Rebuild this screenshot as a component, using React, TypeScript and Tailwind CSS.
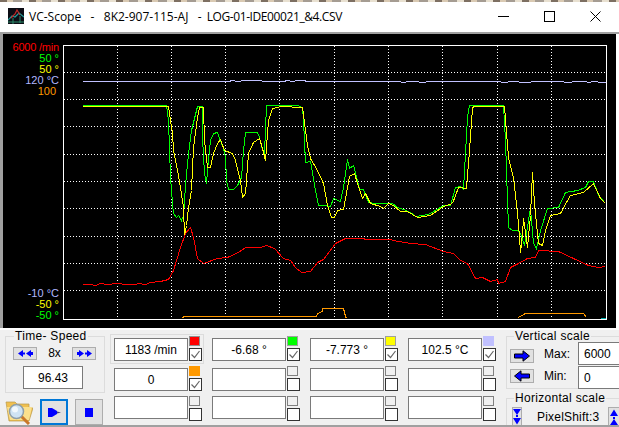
import React from 'react';

// plot lines in page coordinates (the svg viewBox starts at the plot's inner corner)
const LAVENDER = '82,81 228,81 232,80 237,81 245,80 260,80 263,81 283,81 287,80 292,81 298,80 303,80 307,81 400,81 401,82 405,82 406,81 418,81 419,82 425,82 426,81 440,81 500,81 501,82 507,82 508,81 518,81 519,82 530,82 531,81 563,81 564,82 571,82 572,81 586,81 587,82 590,82 591,81 597,81 598,82 605,82';

const ORANGE = '182,317 184,316 316,316 317,313 322,311 322,308 343,308 345,316 346,318 M518,317 525,313 583,313 586,317';

const GREEN = '82,105 166,105 168,120 170,177 172,203 173,213 176,217 178,215 181,220 183,215 185,185 188,153 191,130 193,122 197,106 202,106 202,137 204,173 206,183 207,170 210,140 213,133 217,132 219,138 223,148 225,157 226,180 228,189 233,189 237,185 241,177 243,150 245,132 257,132 259,137 262,150 264,153 266,105 297,105 302,107 303,120 305,162 310,161 315,190 318,205 325,205 330,206 333,198 340,201 343,187 347,159 349,168 353,165 355,172 359,189 363,189 368,202 375,203 392,203 397,207 403,209 410,212 415,216 423,215 430,213 443,205 450,205 455,187 460,186 463,189 467,117 469,105 503,105 505,140 507,200 508,227 512,230 517,230 520,233 524,245 528,220 530,208 533,243 536,248 540,230 547,208 558,207 565,192 577,190 585,187 588,181 593,181 598,195 605,203';

const YELLOW = '82,106 168,106 170,120 172,133 173,150 177,170 180,187 183,207 184,236 186,225 188,207 191,190 193,147 197,117 199,107 203,107 204,140 207,167 210,167 213,153 217,143 220,139 224,150 232,153 235,160 240,180 242,197 245,193 248,153 253,142 259,138 262,148 265,160 268,120 272,108 277,107 280,106 302,107 307,145 310,158 317,170 323,183 327,205 331,217 334,217 337,210 343,209 349,176 354,173 357,183 362,198 365,193 370,203 380,206 383,208 388,203 393,205 400,211 407,211 417,217 430,215 443,206 452,203 458,187 466,188 469,150 472,108 473,106 504,106 508,157 513,177 517,213 518,223 520,252 522,233 523,218 527,247 530,215 532,172 534,203 538,243 542,245 545,230 550,215 560,213 567,200 570,195 583,192 593,183 600,198 605,203';

const RED = '82,284 90,284 95,285 100,283 107,284 117,283 125,284 135,284 138,283 145,284 150,282 160,281 168,279 173,270 180,247 185,233 190,227 193,237 197,258 203,263 217,258 227,257 238,252 245,247 260,247 266,245 274,248 283,258 290,260 295,267 301,272 310,271 317,262 323,259 335,243 345,238 363,238 365,239 390,239 393,240 410,243 425,244 443,251 453,253 460,260 467,263 475,278 482,277 490,281 497,279 498,283 505,281 510,267 518,263 527,258 535,257 538,250 558,251 573,258 588,265 598,267 605,266';

const GRID_X = [117, 171, 225, 279, 334, 388, 442, 497, 551];
const GRID_Y = [72, 99, 126, 154, 181, 208, 236, 263, 290];

const Chart = () => (
  <svg width={542} height={273} viewBox="64 46 542 273" shapeRendering="crispEdges" fill="none">
    <g stroke="#ffffff" strokeDasharray="1 2">
      {GRID_X.map((x) => <line key={x} x1={x + 0.5} y1={46} x2={x + 0.5} y2={319} />)}
      {GRID_Y.map((y) => <line key={y} x1={64} y1={y + 0.5} x2={606} y2={y + 0.5} />)}
    </g>
    <g transform="translate(0.5 0.5)">
      <polyline points={LAVENDER} stroke="#c0c0ff" />
      {ORANGE.split(' M').map((pts) => <polyline key={pts} points={pts} stroke="#ff9900" />)}
      <polyline points={GREEN} stroke="#00ff00" />
      <polyline points={YELLOW} stroke="#ffff00" />
      <polyline points={RED} stroke="#ff0000" />
    </g>
    <rect x={601} y={318} width={5} height={1} fill="#00b0b0" />
  </svg>
);

const Swatch = ({ className }: { className: string }) => (
  <span className={`block w-[11px] h-[10px] border ${className}`} />
);

const Check = ({ on }: { on?: boolean }) => (
  <span className="block w-[13px] h-[13px] border border-[#333333] bg-white">
    {on && (
      <svg width={11} height={11} viewBox="0 0 11 11" fill="none">
        <path d="M1.5 5.5 L4.5 8.5 L9.5 2" stroke="#666666" strokeWidth={1.2} />
      </svg>
    )}
  </span>
);

const Field = ({ value, className = '' }: { value?: string; className?: string }) => (
  <input
    readOnly
    value={value ?? ''}
    className={`block w-[74px] h-[23px] border border-[#7a7a7a] bg-white text-center text-[12px] text-black outline-none ${className}`}
  />
);

type CellProps = { value?: string; swatch: string; on?: boolean; framed?: boolean; flush?: boolean };

const Cell = ({ value, swatch, on, framed, flush }: CellProps) => (
  <div className={`flex w-[94px] h-[30px] pl-[3px] pt-[1px] border ${framed ? 'border-[#dcdcdc]' : 'border-transparent'}`}>
    <Field value={value} className={flush ? '' : 'mt-[2px]'} />
    <div className="ml-[1px] flex flex-col gap-[2px]">
      <Swatch className={swatch} />
      <Check on={on} />
    </div>
  </div>
);

const EMPTY = 'border-[#808080] bg-[#f0f0f0]';

const SmallBtn = ({ children, className = '' }: { children: React.ReactNode; className?: string }) => (
  <button className={`flex items-center justify-center border border-[#adadad] bg-[#e1e1e1] ${className}`}>
    {children}
  </button>
);

const Rewind = ({ flip }: { flip?: boolean }) => (
  <svg width={15} height={7} viewBox="0 0 15 7" className={flip ? '-scale-x-100' : ''}>
    <path d="M0 3.5 L5 0 V7 Z M5 2.5 H7 V4.5 H5 Z M8 3.5 L13 0 V7 Z M13 2 H15 V5 H13 Z" fill="#0000ff" />
  </svg>
);

const BigArrow = ({ left }: { left?: boolean }) => (
  <svg width={16} height={12} viewBox="0 0 16 12" className={left ? '-scale-x-100' : ''}>
    <path d="M0.5 4 H9 V0.8 L15.5 6 L9 11.2 V8 H0.5 Z" fill="#0000ff" stroke="#000000" strokeWidth={1} />
  </svg>
);

const DoubleDown = ({ up }: { up?: boolean }) => (
  <svg width={8} height={16} viewBox="0 0 8 16" className={up ? '-scale-y-100' : ''}>
    <path d="M0 0 H8 L4 6 Z M3 6 H5 V8 H3 Z M0 9 H8 L4 15.5 Z" fill="#0000ff" />
  </svg>
);

const FolderIcon = () => (
  <svg width={28} height={26} viewBox="0 0 28 26" className="block">
    <path d="M1 3 H10 L12 5 H24 V9 H28 L24 22 H4 Z" fill="#f0c050" stroke="#b89a4a" strokeWidth={0.7} />
    <path d="M2 8 H27 L24 21 H5 Z" fill="#fbe08c" />
    <path d="M16 17 L24 25" stroke="#c9782a" strokeWidth={3} />
    <circle cx={11.5} cy={12.5} r={7} fill="#cfe3f3" stroke="#8f9fa8" strokeWidth={1.5} />
    <circle cx={10} cy={10.5} r={3} fill="#f2f8fc" />
  </svg>
);

const AppIcon = () => (
  <svg width={16} height={16} viewBox="0 0 16 16" className="block shrink-0 mb-[2px]">
    <rect width={16} height={16} fill="#0c0c14" />
    <path d="M0 12 L4 8 L7 9 L11 5 L16 9" stroke="#1f9a9a" strokeWidth={1.2} fill="none" />
    <path d="M3 10 L7 6 L9 2 L12 7" stroke="#c02a2a" strokeWidth={1.2} fill="none" />
    <path d="M0 14 H16 M5 10 V16 M12 8 V15" stroke="#2a8a6a" strokeWidth={1} fill="none" />
  </svg>
);

const labelClass = 'h-[11px] leading-[11px]';

export default function App() {
  return (
    <div className="w-[619px] h-[427px] overflow-hidden flex flex-col bg-[#f0f0f0] font-['Liberation_Sans',Arial,sans-serif]">
      {/* wallpaper peeking over the window */}
      <div className="h-[2px] bg-[repeating-linear-gradient(90deg,#7d6f62_0_7px,#d9c9b2_7px_13px,#a59c92_13px_22px,#e8e0d0_22px_29px)]" />

      {/* title bar */}
      <div className="h-[30px] flex items-center bg-white pl-[8px] pr-[1px]">
        <AppIcon />
        <span className="ml-[5px] whitespace-pre text-[12px] text-black font-['Open_Sans',sans-serif]">
          {'VC-Scope   -   8K2-907-115-AJ   -'}
        </span>
        <span className="ml-[5px] whitespace-pre text-[12px] tracking-[-0.4px] text-black font-['Open_Sans',sans-serif]">
          {'LOG-01-IDE00021_&4.CSV'}
        </span>
        <div className="ml-auto flex h-full pb-[2px] text-black">
          <div className="w-[46px] flex items-center justify-center">
            <svg width={11} height={11} viewBox="0 0 11 11"><path d="M0 5.5 H11" stroke="#000" /></svg>
          </div>
          <div className="w-[46px] flex items-center justify-center">
            <svg width={11} height={11} viewBox="0 0 11 11"><rect x={0.5} y={0.5} width={10} height={10} fill="none" stroke="#000" /></svg>
          </div>
          <div className="w-[46px] flex items-center justify-center">
            <svg width={11} height={11} viewBox="0 0 11 11"><path d="M0.5 0.5 L10.5 10.5 M10.5 0.5 L0.5 10.5" stroke="#000" /></svg>
          </div>
        </div>
      </div>

      {/* scope area */}
      <div className="flex h-[296px] border-t-2 border-[#a0a0a0] bg-white">
        <div className="w-[3px] bg-[#a0a0a0]" />
        <div className="w-[613px] h-[294px] bg-black flex pt-[8px]">
          <div className="w-[60px] h-[279px] pr-[4px] flex flex-col justify-between text-right text-[11px]">
            <div>
              <div className={`${labelClass} tracking-[-0.2px] text-[#ff0000]`}>6000 /min</div>
              <div className={`${labelClass} text-[#00ff00]`}>50 °</div>
              <div className={`${labelClass} text-[#ffff00]`}>50 °</div>
              <div className={`${labelClass} text-[#b0b8ff]`}>120 °C</div>
              <div className={`${labelClass} pr-[3px] text-[#ff9900]`}>100</div>
            </div>
            <div>
              <div className={`${labelClass} text-[#b0b8ff]`}>-10 °C</div>
              <div className={`${labelClass} text-[#ffff00]`}>-50 °</div>
              <div className={`${labelClass} text-[#00ff00]`}>-50 °</div>
            </div>
          </div>
          <div className="mt-[3px] w-[544px] h-[275px] border border-white">
            <Chart />
          </div>
        </div>
      </div>

      {/* control panel */}
      <div className="flex-1 flex items-start border-b-2 border-[#a0a0a0] border-t-2 border-t-white overflow-hidden text-[12px] text-black">
        <div className="ml-[5px] w-[100px] shrink-0">
          <fieldset className="h-[63px] border border-[#dcdcdc]">
            <legend className="ml-[8px] px-[1px] leading-[13px] tracking-[0.3px]">Time- Speed</legend>
            <div className="mt-[4px] ml-[7px] h-[13px] flex items-center leading-[13px]">
              <SmallBtn className="w-[24px] h-[13px]"><Rewind /></SmallBtn>
              <span className="w-[35px] text-center">8x</span>
              <SmallBtn className="w-[24px] h-[13px]"><Rewind flip /></SmallBtn>
            </div>
            <input
              readOnly
              value="96.43"
              className="block mt-[6px] ml-[17px] w-[60px] h-[23px] border border-[#7a7a7a] bg-white text-center outline-none"
            />
          </fieldset>
          <div className="mt-[6px] flex">
            <div className="w-[28px] h-[26px]"><FolderIcon /></div>
            <button className="ml-[7px] w-[28px] h-[26px] flex items-center justify-center border-2 border-[#0078d7] bg-[#e1e1e1]">
              <svg width={13} height={9} viewBox="0 0 13 9">
                <path d="M0 0 H4 L9 3 V6 L4 9 H0 Z" fill="#0000ff" />
                <path d="M9 3.4 L13 4.5 L9 5.6 Z" fill="#404080" />
              </svg>
            </button>
            <button className="ml-[7px] w-[28px] h-[26px] flex items-center justify-center border border-[#adadad] bg-[#e1e1e1]">
              <span className="block w-[8px] h-[9px] bg-[#0000ff]" />
            </button>
          </div>
        </div>

        <div className="ml-[5px] mt-[4px] grid grid-cols-[98px_98px_98px_98px] grid-rows-[30px_30px_30px] shrink-0">
          <Cell value="1183 /min" swatch="border-[#909090] bg-[#ff0000]" on framed />
          <Cell value="-6.68 °" swatch="border-[#a0a0a0] bg-[#00ff00]" on />
          <Cell value="-7.773 °" swatch="border-[#a0a0a0] bg-[#ffff00]" on />
          <Cell value="102.5 °C" swatch="border-[#c0c0ff] bg-[#c0c0ff]" on />
          <Cell value="0" swatch="border-[#ff9900] bg-[#ff9900]" on />
          <Cell swatch={EMPTY} />
          <Cell swatch={EMPTY} />
          <Cell swatch={EMPTY} />
          <Cell swatch={EMPTY} flush />
          <Cell swatch={EMPTY} flush />
          <Cell swatch={EMPTY} flush />
          <Cell swatch={EMPTY} flush />
        </div>

        <div className="ml-[4px] w-[120px] shrink-0">
          <fieldset className="h-[59px] border border-[#dcdcdc]">
            <legend className="ml-[7px] px-[1px] h-[12px] leading-[12px] tracking-[0.3px]">Vertical scale</legend>
            <div className="flex h-[24px]">
              <SmallBtn className="ml-[3px] mt-[7px] w-[24px] h-[14px]"><BigArrow /></SmallBtn>
              <span className="ml-[10px] mt-[3px] w-[34px]">Max:</span>
              <input readOnly value="6000" className="w-[60px] h-[23px] pl-[5px] border border-[#7a7a7a] bg-white outline-none" />
            </div>
            <div className="flex h-[24px]">
              <SmallBtn className="ml-[3px] mt-[3px] w-[24px] h-[14px]"><BigArrow left /></SmallBtn>
              <span className="ml-[10px] mt-[1px] w-[34px]">Min:</span>
              <input readOnly value="0" className="w-[60px] h-[23px] pl-[5px] border border-[#7a7a7a] bg-white outline-none" />
            </div>
          </fieldset>
          <fieldset className="mt-[3px] h-[40px] border border-[#dcdcdc]">
            <legend className="ml-[7px] px-[1px] h-[13px] leading-[13px] tracking-[0.3px]">Horizontal scale</legend>
            <div className="mt-[2px] flex items-start">
              <SmallBtn className="ml-[5px] w-[10px] h-[20px]"><DoubleDown /></SmallBtn>
              <span className="ml-[15px] mt-[1px] w-[71px] tracking-[0.2px]">PixelShift:3</span>
              <SmallBtn className="w-[12px] h-[20px]"><DoubleDown up /></SmallBtn>
            </div>
          </fieldset>
        </div>
      </div>
    </div>
  );
}
